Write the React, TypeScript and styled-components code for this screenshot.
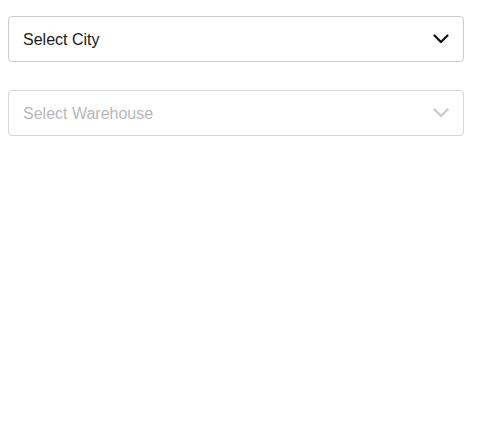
import styled, { createGlobalStyle } from "styled-components";

const GlobalStyle = createGlobalStyle`
  body {
    margin: 0;
    background: #ffffff;
    font-family: "Liberation Sans", Arial, sans-serif;
  }
`;

const Page = styled.div`
  display: flex;
  flex-direction: column;
  gap: 28px;
  padding: 16px 16px 0 8px;
  width: 456px;
`;

const SelectBox = styled.div<{ $disabled?: boolean }>`
  display: flex;
  align-items: center;
  justify-content: space-between;
  box-sizing: border-box;
  height: 46px;
  padding: 0 14px 0 14px;
  border: 1px solid ${(p) => (p.$disabled ? "#d6d6d6" : "#cccccc")};
  border-radius: 4px;
  background: #ffffff;
  cursor: ${(p) => (p.$disabled ? "default" : "pointer")};
`;

const Label = styled.span<{ $disabled?: boolean }>`
  font-size: 16px;
  padding-top: 2px;
  color: ${(p) => (p.$disabled ? "#b8b8b8" : "#1a1a1a")};
`;

const Chevron = ({ color }: { color: string }) => (
  <svg width="16" height="10" viewBox="0 0 16 10" fill="none">
    <polyline
      points="1.5,1.5 8,8 14.5,1.5"
      stroke={color}
      strokeWidth="2.2"
      strokeLinecap="round"
      strokeLinejoin="round"
    />
  </svg>
);

const selects = [
  { label: "Select City", disabled: false },
  { label: "Select Warehouse", disabled: true },
];

export default function App() {
  return (
    <>
      <GlobalStyle />
      <Page>
        {selects.map((s) => (
          <SelectBox key={s.label} $disabled={s.disabled}>
            <Label $disabled={s.disabled}>{s.label}</Label>
            <Chevron color={s.disabled ? "#c8c8c8" : "#111111"} />
          </SelectBox>
        ))}
      </Page>
    </>
  );
}
